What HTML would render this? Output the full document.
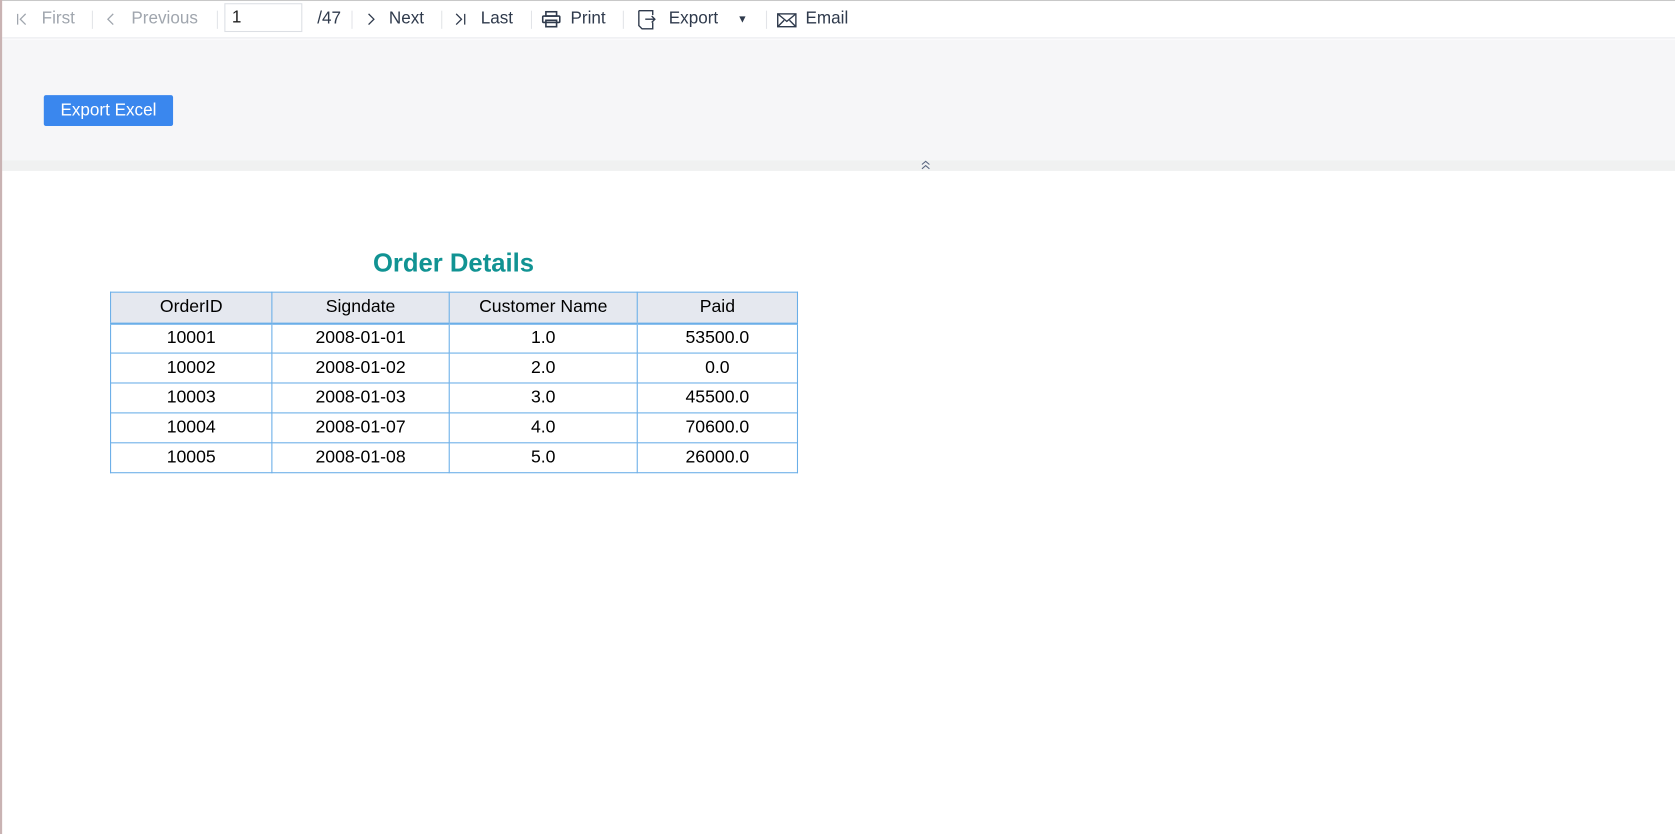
<!DOCTYPE html>
<html><head><style>
*{margin:0;padding:0;box-sizing:border-box}
html,body{width:1675px;height:834px;overflow:hidden;background:#fff}
body{font-family:"Liberation Sans",sans-serif;position:relative}
#w{position:absolute;left:0;top:0;width:1568px;height:781px;transform:scale(1.0683);transform-origin:0 0}
.lb{position:absolute;left:0;top:0;width:2px;height:790px;background:#c9b3b3}
.tb{position:absolute;left:0;top:0;width:1568px;height:1px;background:#c8c8c8}
.bar{position:absolute;left:2px;top:1px;width:1566px;height:35px;background:#fff;border-bottom:1px solid #e6e8ec;font-size:16px;color:#2f3a4c}
.bar span{position:absolute;top:8px}
.bar svg{position:absolute}
.g{color:#a0a6ae}
.sep{position:absolute;top:9px;width:1px;height:17px;background:#e2e4e8}
.inp{position:absolute;left:208px;top:2px;width:73px;height:27px;border:1px solid #dcdfe4;padding-left:6px;font-size:16px;line-height:25px;color:#222}
.panel{position:absolute;left:2px;top:37px;width:1566px;height:113px;background:#f6f6f8}
.strip{position:absolute;left:2px;top:150px;width:1566px;height:10px;background:#f0f1f1}
.btn{position:absolute;left:41px;top:89px;width:121px;height:29px;background:#3a87ee;border-radius:2px;color:#fff;font-size:16px;line-height:29px;text-align:center}
h1{position:absolute;left:103px;width:643px;top:233px;text-align:center;font-size:24px;color:#119393;font-weight:bold}
table{position:absolute;left:103px;top:273px;border-collapse:collapse;font-size:16.5px;color:#000}
td{border:1px solid #6aaee8;text-align:center;height:28px;padding:0}
tr.h td{background:#e5e8ef;height:29px;border-bottom:2px solid #6aaee8}
</style></head><body>
<div id="w">
<div class="tb"></div>
<div class="bar">
<svg style="left:13px;top:11px" width="12" height="12" viewBox="0 0 12 12" fill="none" stroke="#a0a6ae" stroke-width="1.2"><path d="M1.5 1v10M9 1L4 6l5 5"/></svg>
<span class="g" style="left:37px">First</span>
<div class="sep" style="left:84px"></div>
<svg style="left:97px;top:11px" width="10" height="12" viewBox="0 0 10 12" fill="none" stroke="#a0a6ae" stroke-width="1.2"><path d="M7 1L2 6l5 5"/></svg>
<span class="g" style="left:121px">Previous</span>
<div class="sep" style="left:201px"></div>
<div class="inp">1</div>
<span style="left:295px">/47</span>
<div class="sep" style="left:327px"></div>
<svg style="left:340px;top:11px" width="10" height="12" viewBox="0 0 10 12" fill="none" stroke="#2f3a4c" stroke-width="1.2"><path d="M3 1l5 5-5 5"/></svg>
<span style="left:362px">Next</span>
<div class="sep" style="left:411px"></div>
<svg style="left:423px;top:11px" width="12" height="12" viewBox="0 0 12 12" fill="none" stroke="#2f3a4c" stroke-width="1.2"><path d="M2 1l5 5-5 5M10 1v10"/></svg>
<span style="left:448px">Last</span>
<div class="sep" style="left:495px"></div>
<svg style="left:505px;top:9px" width="18" height="16" viewBox="0 0 18 16" fill="none" stroke="#2f3a4c" stroke-width="1.5"><rect x="4" y="1" width="10" height="4"/><rect x="1" y="5" width="16" height="6" rx="1"/><rect x="4" y="9" width="10" height="6"/></svg>
<span style="left:532px">Print</span>
<div class="sep" style="left:581px"></div>
<svg style="left:595px;top:8px" width="17" height="19" viewBox="0 0 17 19" fill="none" stroke="#2f3a4c" stroke-width="1.3"><path d="M1 1h13v4M14 12v6H4L1 15V1"/><path d="M7 9h9M13 6l3 3-3 3"/></svg>
<span style="left:624px">Export</span>
<span style="left:688px;font-size:10px;top:12px">&#9660;</span>
<div class="sep" style="left:715px"></div>
<svg style="left:725px;top:11px" width="19" height="14" viewBox="0 0 19 14" fill="none" stroke="#2f3a4c" stroke-width="1.3"><rect x="1" y="1" width="17" height="12"/><path d="M1 1l8.5 7L18 1M1 13l6-6M18 13l-6-6"/></svg>
<span style="left:752px">Email</span>
</div>
<div class="panel"></div>
<div class="strip"></div>
<svg style="position:absolute;left:862px;top:150px" width="9" height="9" viewBox="0 0 9 9" fill="none" stroke="#5a6680" stroke-width="1"><path d="M1 4l3.5-3 3.5 3M1 8l3.5-3 3.5 3"/></svg>
<div class="btn">Export Excel</div>
<div class="lb"></div>
<h1>Order Details</h1>
<table>
<colgroup><col style="width:151px"><col style="width:166px"><col style="width:176px"><col style="width:150px"></colgroup>
<tr class="h"><td>OrderID</td><td>Signdate</td><td>Customer Name</td><td>Paid</td></tr>
<tr><td>10001</td><td>2008-01-01</td><td>1.0</td><td>53500.0</td></tr>
<tr><td>10002</td><td>2008-01-02</td><td>2.0</td><td>0.0</td></tr>
<tr><td>10003</td><td>2008-01-03</td><td>3.0</td><td>45500.0</td></tr>
<tr><td>10004</td><td>2008-01-07</td><td>4.0</td><td>70600.0</td></tr>
<tr><td>10005</td><td>2008-01-08</td><td>5.0</td><td>26000.0</td></tr>
</table>
</div>
</body></html>
